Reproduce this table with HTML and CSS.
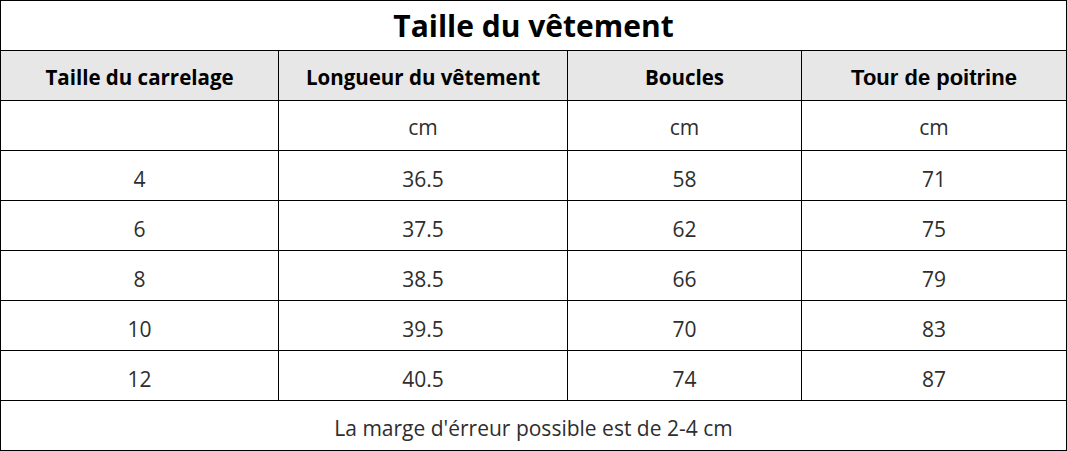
FILE: index.html
```html
<!DOCTYPE html>
<html lang="fr">
<head>
<meta charset="utf-8">
<link rel="stylesheet" href="styles.css">
</head>
<body>
<table class="size-table">
  <colgroup>
    <col class="c1"><col class="c2"><col class="c3"><col class="c4">
  </colgroup>
  <tr class="title-row"><td colspan="4">Taille du vêtement</td></tr>
  <tr class="head-row">
    <th>Taille du carrelage</th>
    <th>Longueur du vêtement</th>
    <th>Boucles</th>
    <th class="arial">Tour de poitrine</th>
  </tr>
  <tr class="unit-row"><td></td><td>cm</td><td>cm</td><td>cm</td></tr>
  <tr class="data-row"><td>4</td><td>36.5</td><td>58</td><td>71</td></tr>
  <tr class="data-row"><td>6</td><td>37.5</td><td>62</td><td>75</td></tr>
  <tr class="data-row"><td>8</td><td>38.5</td><td>66</td><td>79</td></tr>
  <tr class="data-row"><td>10</td><td>39.5</td><td>70</td><td>83</td></tr>
  <tr class="data-row"><td>12</td><td>40.5</td><td>74</td><td>87</td></tr>
  <tr class="note-row"><td colspan="4">La marge d'érreur possible est de 2-4 cm</td></tr>
</table>
</body>
</html>
```
FILE: styles.css
```css
html, body {
  margin: 0;
  padding: 0;
  background: #ffffff;
}
.size-table {
  border-collapse: collapse;
  table-layout: fixed;
  width: 1066px;
  font-family: "Open Sans", "Noto Sans", sans-serif;
  color: #2e2e2e;
}
.c1 { width: 278px; }
.c2 { width: 289px; }
.c3 { width: 234px; }
.c4 { width: 265px; }
.size-table td, .size-table th {
  box-sizing: border-box;
  border: 1px solid #000;
  height: 50px;
  padding: 0;
  text-align: center;
  vertical-align: middle;
  font-size: 21px;
  font-weight: 400;
  line-height: 1;
}
.title-row td {
  font-size: 30px;
  font-weight: 700;
  color: #000;
}
.head-row th {
  background: #e7e7e7;
  font-weight: 700;
  color: #000;
  font-size: 20.5px;
  padding-top: 4px;
}
.head-row th.arial {
  font-family: "Liberation Sans", Arial, sans-serif;
  font-size: 22px;
}
.unit-row td {
  padding-top: 4px;
}
.data-row td {
  padding-top: 7px;
}
.note-row td {
  font-size: 21px;
  padding-top: 6px;
}
```
